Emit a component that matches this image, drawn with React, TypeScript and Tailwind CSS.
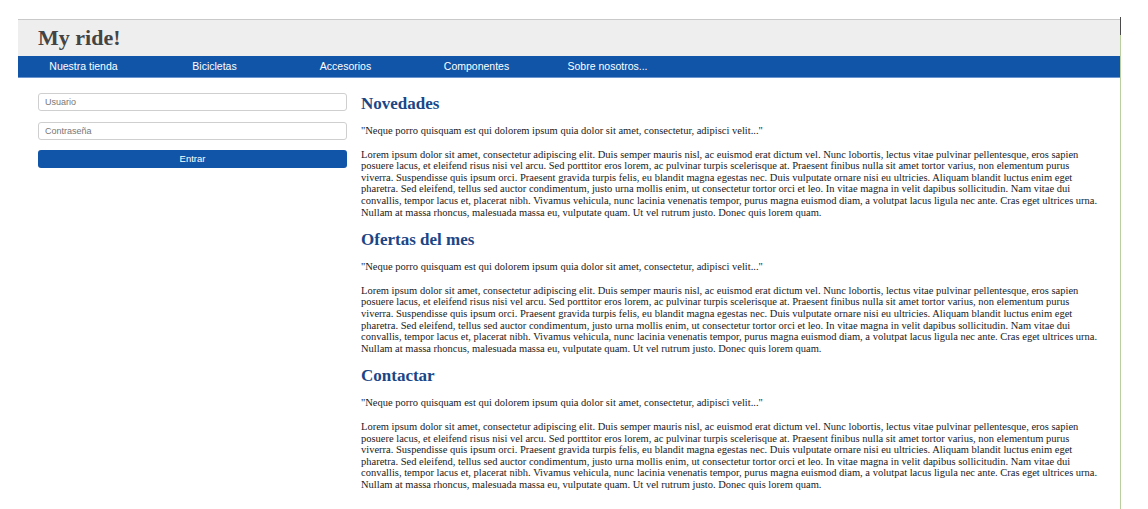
import React from 'react'

const navItems = ['Nuestra tienda', 'Bicicletas', 'Accesorios', 'Componentes', 'Sobre nosotros...']

const quote = '"Neque porro quisquam est qui dolorem ipsum quia dolor sit amet, consectetur, adipisci velit..."'

const lorem =
  'Lorem ipsum dolor sit amet, consectetur adipiscing elit. Duis semper mauris nisl, ac euismod erat dictum vel. Nunc lobortis, lectus vitae pulvinar pellentesque, eros sapien posuere lacus, et eleifend risus nisi vel arcu. Sed porttitor eros lorem, ac pulvinar turpis scelerisque at. Praesent finibus nulla sit amet tortor varius, non elementum purus viverra. Suspendisse quis ipsum orci. Praesent gravida turpis felis, eu blandit magna egestas nec. Duis vulputate ornare nisi eu ultricies. Aliquam blandit luctus enim eget pharetra. Sed eleifend, tellus sed auctor condimentum, justo urna mollis enim, ut consectetur tortor orci et leo. In vitae magna in velit dapibus sollicitudin. Nam vitae dui convallis, tempor lacus et, placerat nibh. Vivamus vehicula, nunc lacinia venenatis tempor, purus magna euismod diam, a volutpat lacus ligula nec ante. Cras eget ultrices urna. Nullam at massa rhoncus, malesuada massa eu, vulputate quam. Ut vel rutrum justo. Donec quis lorem quam.'

const sections = ['Novedades', 'Ofertas del mes', 'Contactar']

export default function App() {
  return (
    <div className="flex bg-white pt-[17px] pl-[18px] min-h-[509px]">
      <div className="w-[1102px] mt-[2px]">
        {/* cabecera */}
        <header className="bg-[#eeeeee] border-t border-[#c9c9c9] h-[37px] flex items-center pl-[20px]">
          <h1 className="font-['Liberation_Serif',serif] font-bold text-[22px] text-[#444444] leading-none">My ride!</h1>
        </header>
        <nav className="bg-[#1155a9] border-b border-[#6b95cf] h-[22px] flex items-center font-['Liberation_Sans',Arial,sans-serif] text-[10.5px] text-white">
          {navItems.map((n) => (
            <a key={n} className="w-[131px] text-center">{n}</a>
          ))}
        </nav>

        <div className="flex gap-[14px] px-[20px] pt-[15px]">
          <div className="w-[309px] shrink-0 font-['Liberation_Sans',Arial,sans-serif]">
            <input
              placeholder="Usuario"
              className="block w-full h-[18px] mb-[11px] border border-[#cfcfcf] rounded-[3px] px-[6px] text-[9px] placeholder:text-[#777]"
            />
            <input
              type="password"
              placeholder="Contraseña"
              className="block w-full h-[18px] mb-[10px] border border-[#cfcfcf] rounded-[3px] px-[6px] text-[9px] placeholder:text-[#777]"
            />
            <button className="block w-full h-[18px] bg-[#1155a9] rounded-[3px] text-white text-[9.5px]">Entrar</button>
          </div>

          <main className="flex-1 pt-[1px] font-['Liberation_Serif',serif] text-[#1a1a1a]">
            {sections.map((s) => (
              <section key={s} className="mb-[12px]">
                <h2 className="text-[17px] leading-[20px] font-bold text-[#1b4686] mb-[11px]">{s}</h2>
                <p className="text-[10.5px] leading-[11.6px] mb-[12px]">{quote}</p>
                <p className="text-[10.5px] leading-[11.6px]">{lorem}</p>
              </section>
            ))}
          </main>
        </div>
      </div>
      <div className="w-px bg-[#b9cf9f] flex flex-col">
        <div className="h-[18px] bg-[#4a4a4a]" />
      </div>
    </div>
  )
}
